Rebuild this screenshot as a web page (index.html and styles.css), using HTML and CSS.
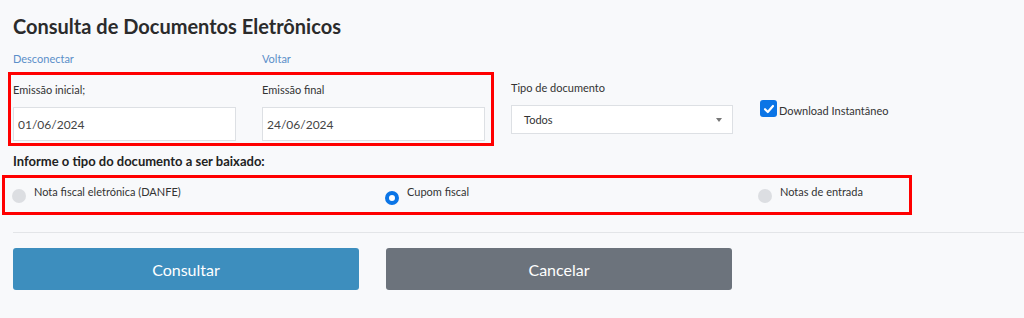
FILE: index.html
```html
<!DOCTYPE html>
<html lang="pt-BR">
<head>
    <meta charset="UTF-8">
    <meta name="viewport" content="width=device-width, initial-scale=1.0">
    <title>Consulta de Documentos Eletrônicos</title>
    <link rel="stylesheet" href="styles.css">
</head>
<body>
    <div class="page">
        <h1>Consulta de Documentos Eletrônicos</h1>

        <div class="links">
            <a href="#">Desconectar</a>
            <a href="#">Voltar</a>
        </div>

        <!-- Filtros -->
        <div class="filters">
            <div class="mark mark-dates">
                <div class="field">
                    <label for="dtInicial">Emissão inicial;</label>
                    <input type="text" id="dtInicial" value="01/06/2024">
                </div>
                <div class="field">
                    <label for="dtFinal">Emissão final</label>
                    <input type="text" id="dtFinal" value="24/06/2024">
                </div>
            </div>
            <div class="field field-type">
                <label for="tipo">Tipo de documento</label>
                <div class="select">
                    <span>Todos</span>
                    <span class="caret"></span>
                </div>
            </div>
            <label class="check">
                <span class="check-box">
                    <svg width="12" height="12" viewBox="0 0 12 12"><path d="M2 6.2 L4.8 9 L10 3" fill="none" stroke="#fff" stroke-width="2.2" stroke-linecap="round" stroke-linejoin="round"/></svg>
                </span>
                Download Instantâneo
            </label>
        </div>

        <h2>Informe o tipo do documento a ser baixado:</h2>

        <div class="mark mark-radios">
            <label class="radio"><span class="dot"></span>Nota fiscal eletrónica (DANFE)</label>
            <label class="radio"><span class="dot on"></span>Cupom fiscal</label>
            <label class="radio"><span class="dot"></span>Notas de entrada</label>
        </div>

        <hr>

        <div class="actions">
            <button class="btn btn-primary">Consultar</button>
            <button class="btn btn-secondary">Cancelar</button>
        </div>
    </div>
</body>
</html>
```

FILE: styles.css
```css
body {
    font-family: 'Lato', 'Noto Sans', sans-serif;
    background-color: #f8f9fb;
    color: #333;
    margin: 0;
}
.page {
    padding: 0 0 0 13px;
}
h1 {
    font-size: 20px;
    font-weight: 700;
    color: #2b2b2b;
    margin: 0;
    padding-top: 13px;
    line-height: 26px;
}
.links {
    display: flex;
    margin-top: 13px;
    font-size: 11px;
    line-height: 14px;
}
.links a {
    color: #5b8fc9;
    text-decoration: none;
    width: 249px;
}
.filters {
    display: flex;
    align-items: flex-start;
    margin-top: 6px;
}
.mark {
    border: 3px solid #ff0000;
    box-sizing: border-box;
}
.mark-dates {
    display: flex;
    gap: 26px;
    margin-left: -5px;
    padding: 8px 6px 3px 2px;
    height: 74px;
}
.field label {
    display: block;
    font-size: 11px;
    line-height: 14px;
    color: #333;
    margin-bottom: 10px;
}
.field input {
    width: 223px;
    height: 34px;
    box-sizing: border-box;
    border: 1px solid #dde0e4;
    background-color: #fff;
    padding: 0 4px;
    font-family: inherit;
    font-size: 12px;
    color: #444;
}
.field input:focus {
    outline: none;
}
.field-type {
    margin-left: 17px;
    padding-top: 9px;
}
.select {
    width: 222px;
    height: 29px;
    box-sizing: border-box;
    border: 1px solid #dde0e4;
    background-color: #fff;
    display: flex;
    align-items: center;
    justify-content: space-between;
    padding: 0 10px 0 12px;
    margin-top: 1px;
    font-size: 11px;
    color: #333;
}
.caret {
    border-left: 3px solid transparent;
    border-right: 3px solid transparent;
    border-top: 4px solid #777;
}
.check {
    display: flex;
    align-items: flex-end;
    margin: 28px 0 0 27px;
    font-size: 11px;
    color: #333;
}
.check-box {
    width: 17px;
    height: 17px;
    border-radius: 3px;
    background-color: #0b75e6;
    display: flex;
    align-items: center;
    justify-content: center;
    margin-right: 2px;
}
h2 {
    font-size: 13px;
    font-weight: 700;
    color: #222;
    margin: 6px 0 0;
    line-height: 18px;
}
.mark-radios {
    display: grid;
    grid-template-columns: 373px 373px 148px;
    width: 910px;
    height: 40px;
    margin: 5px 0 0 -11px;
    padding: 7px 0 0 7px;
}
.radio {
    display: flex;
    align-items: flex-start;
    font-size: 11px;
    line-height: 14px;
    color: #333;
}
.dot {
    width: 14px;
    height: 14px;
    border-radius: 50%;
    background-color: #dcdee2;
    margin: 4px 8px 0 0;
    box-sizing: border-box;
}
.dot.on {
    background-color: #fff;
    border: 4px solid #0b75e6;
    margin-top: 6px;
}
hr {
    border: none;
    border-top: 1px solid #e3e5e8;
    margin: 17px 0 0;
}
.actions {
    display: flex;
    gap: 27px;
    margin-top: 15px;
}
.btn {
    width: 346px;
    height: 42px;
    border: none;
    border-radius: 3px;
    color: #fff;
    font-family: inherit;
    font-size: 16px;
    cursor: pointer;
}
.btn-primary {
    background-color: #3d8ebe;
}
.btn-secondary {
    background-color: #6c737c;
}
```
